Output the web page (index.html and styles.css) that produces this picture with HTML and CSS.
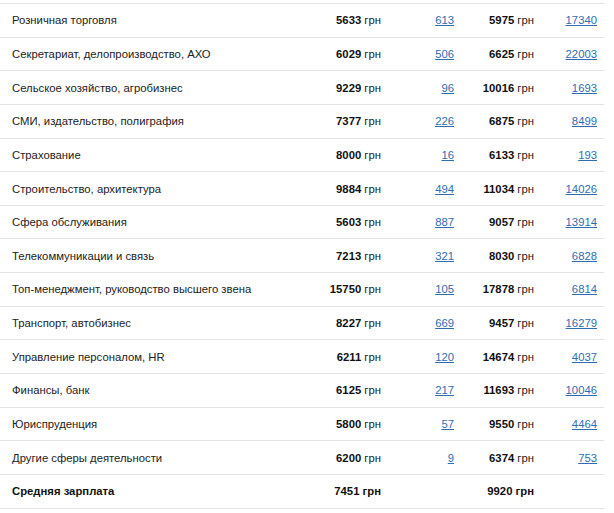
FILE: index.html
```html
<!DOCTYPE html>
<html lang="ru">
<head>
<meta charset="utf-8">
<title>Зарплаты по сферам</title>
<link rel="stylesheet" href="styles.css">
</head>
<body>
<div class="wrap">
<table class="salary">
<colgroup>
<col class="c-name"><col class="c-sal"><col class="c-cnt"><col class="c-sal2"><col class="c-cnt2">
</colgroup>
<tbody>
<tr><td class="name">Розничная торговля</td><td class="sal"><b>5633</b> грн</td><td class="cnt"><a href="#">613</a></td><td class="sal"><b>5975</b> грн</td><td class="cnt"><a href="#">17340</a></td></tr>
<tr><td class="name">Секретариат, делопроизводство, АХО</td><td class="sal"><b>6029</b> грн</td><td class="cnt"><a href="#">506</a></td><td class="sal"><b>6625</b> грн</td><td class="cnt"><a href="#">22003</a></td></tr>
<tr><td class="name">Сельское хозяйство, агробизнес</td><td class="sal"><b>9229</b> грн</td><td class="cnt"><a href="#">96</a></td><td class="sal"><b>10016</b> грн</td><td class="cnt"><a href="#">1693</a></td></tr>
<tr><td class="name">СМИ, издательство, полиграфия</td><td class="sal"><b>7377</b> грн</td><td class="cnt"><a href="#">226</a></td><td class="sal"><b>6875</b> грн</td><td class="cnt"><a href="#">8499</a></td></tr>
<tr><td class="name">Страхование</td><td class="sal"><b>8000</b> грн</td><td class="cnt"><a href="#">16</a></td><td class="sal"><b>6133</b> грн</td><td class="cnt"><a href="#">193</a></td></tr>
<tr><td class="name">Строительство, архитектура</td><td class="sal"><b>9884</b> грн</td><td class="cnt"><a href="#">494</a></td><td class="sal"><b>11034</b> грн</td><td class="cnt"><a href="#">14026</a></td></tr>
<tr><td class="name">Сфера обслуживания</td><td class="sal"><b>5603</b> грн</td><td class="cnt"><a href="#">887</a></td><td class="sal"><b>9057</b> грн</td><td class="cnt"><a href="#">13914</a></td></tr>
<tr><td class="name">Телекоммуникации и связь</td><td class="sal"><b>7213</b> грн</td><td class="cnt"><a href="#">321</a></td><td class="sal"><b>8030</b> грн</td><td class="cnt"><a href="#">6828</a></td></tr>
<tr><td class="name">Топ-менеджмент, руководство высшего звена</td><td class="sal"><b>15750</b> грн</td><td class="cnt"><a href="#">105</a></td><td class="sal"><b>17878</b> грн</td><td class="cnt"><a href="#">6814</a></td></tr>
<tr><td class="name">Транспорт, автобизнес</td><td class="sal"><b>8227</b> грн</td><td class="cnt"><a href="#">669</a></td><td class="sal"><b>9457</b> грн</td><td class="cnt"><a href="#">16279</a></td></tr>
<tr><td class="name">Управление персоналом, HR</td><td class="sal"><b>6211</b> грн</td><td class="cnt"><a href="#">120</a></td><td class="sal"><b>14674</b> грн</td><td class="cnt"><a href="#">4037</a></td></tr>
<tr><td class="name">Финансы, банк</td><td class="sal"><b>6125</b> грн</td><td class="cnt"><a href="#">217</a></td><td class="sal"><b>11693</b> грн</td><td class="cnt"><a href="#">10046</a></td></tr>
<tr><td class="name">Юриспруденция</td><td class="sal"><b>5800</b> грн</td><td class="cnt"><a href="#">57</a></td><td class="sal"><b>9550</b> грн</td><td class="cnt"><a href="#">4464</a></td></tr>
<tr><td class="name">Другие сферы деятельности</td><td class="sal"><b>6200</b> грн</td><td class="cnt"><a href="#">9</a></td><td class="sal"><b>6374</b> грн</td><td class="cnt"><a href="#">753</a></td></tr>
<tr class="total"><td class="name">Средняя зарплата</td><td class="sal">7451 грн</td><td class="cnt"></td><td class="sal">9920 грн</td><td class="cnt"></td></tr>
</tbody>
</table>
</div>
</body>
</html>
```

FILE: styles.css
```css
html, body {
  margin: 0;
  padding: 0;
  background: #ffffff;
}

body {
  font-family: "Liberation Sans", Arial, sans-serif;
  font-size: 11.3px;
  color: #222222;
}

.wrap {
  padding-top: 3px;
}

.salary {
  width: 604px;
  border-collapse: collapse;
  table-layout: fixed;
}

.c-name { width: 320px; }
.c-sal { width: 68px; }
.c-cnt { width: 73px; }
.c-sal2 { width: 80px; }
.c-cnt2 { width: 63px; }

.salary tr {
  height: 33.65px;
}

.salary td {
  border-top: 1px solid #e3e3e3;
  padding: 0 7px 0 0;
  vertical-align: middle;
  white-space: nowrap;
}

.salary tr:last-child td {
  border-bottom: 1px solid #e3e3e3;
}

.salary td.name {
  padding-left: 12px;
}

.salary td.sal,
.salary td.cnt {
  text-align: right;
}

.salary b {
  font-weight: bold;
  color: #111111;
}

.salary a {
  color: #2f6db3;
  text-decoration: underline;
}

.total td {
  font-weight: bold;
  color: #111111;
}
```
